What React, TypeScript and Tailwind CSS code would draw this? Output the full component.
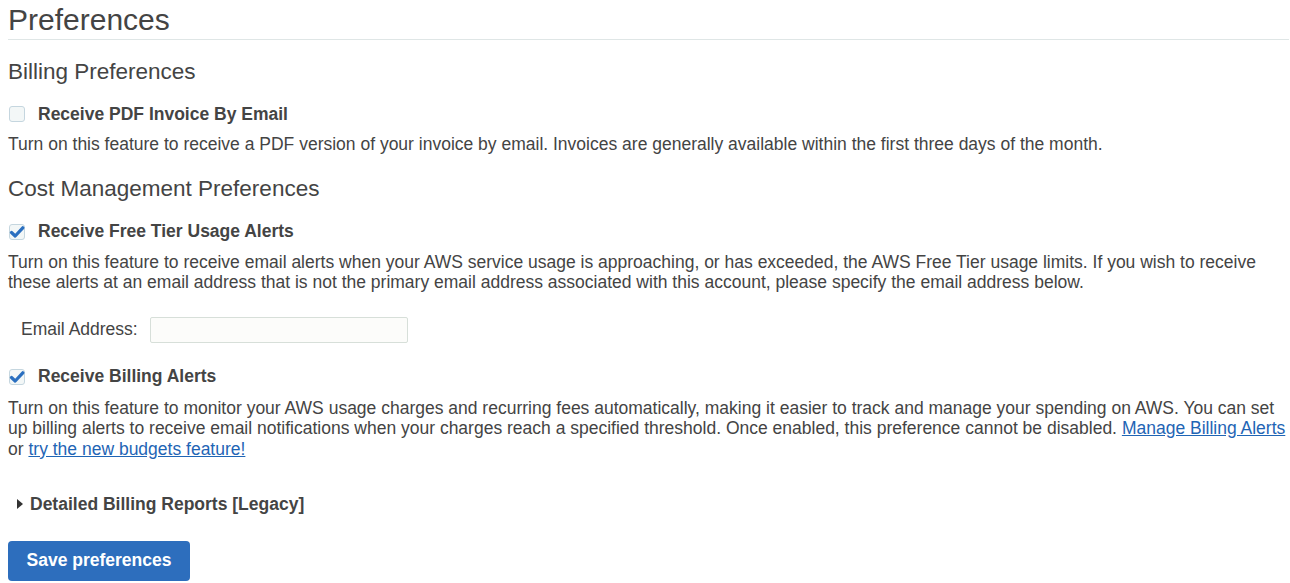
import React from "react";

function Check({ checked }: { checked?: boolean }) {
  return (
    <span className="relative inline-block w-[16px] h-[16px] rounded-[3px] border border-[#c5d6df] bg-[#f3f7f7] shrink-0">
      {checked && (
        <svg viewBox="0 0 16 16" className="absolute left-[-1px] top-[-1px] w-[16px] h-[16px]">
          <path d="M2.5 8.5 L6.2 12 L13.8 3.8" fill="none" stroke="#2a6fc0" strokeWidth="3.2" strokeLinecap="round" strokeLinejoin="round" />
        </svg>
      )}
    </span>
  );
}

function Option({ label, checked }: { label: string; checked?: boolean }) {
  return (
    <label className="flex items-center gap-[13px] pl-[1px] h-[20px] font-bold text-[17.5px] text-[#444]">
      <Check checked={checked} />
      <span>{label}</span>
    </label>
  );
}

export default function App() {
  return (
    <div className="bg-white text-[#444] text-[17.5px] leading-[20.5px] pl-2 pr-[1px] pb-1" style={{ fontFamily: '"Liberation Sans", Arial, sans-serif' }}>
      <h1 className="text-[30px] leading-[36px] pt-[2px] pb-[1px] border-b border-[#dfe6e6]">Preferences</h1>

      <h2 className="text-[22.5px] leading-[26px] mt-[19px]">Billing Preferences</h2>
      <div className="mt-[19px]">
        <Option label="Receive PDF Invoice By Email" />
      </div>
      <p className="mt-[10px]">
        Turn on this feature to receive a PDF version of your invoice by email. Invoices are generally available within the first three days of the month.
      </p>

      <h2 className="text-[22.5px] leading-[26px] mt-[21px]">Cost Management Preferences</h2>
      <div className="mt-[20px]">
        <Option label="Receive Free Tier Usage Alerts" checked />
      </div>
      <p className="mt-[10px]">
        Turn on this feature to receive email alerts when your AWS service usage is approaching, or has exceeded, the AWS Free Tier usage limits. If you wish to receive these alerts at an email address that is not the primary email address associated with this account, please specify the email address below.
      </p>
      <div className="flex items-center mt-[24px] pl-[13px] gap-[12px]">
        <span>Email Address:</span>
        <input className="w-[258px] h-[26px] border border-[#d7dfd9] rounded-[2px] bg-[#fcfcfa] outline-none" />
      </div>

      <div className="mt-[24px]">
        <Option label="Receive Billing Alerts" checked />
      </div>
      <p className="mt-[11px]">
        Turn on this feature to monitor your AWS usage charges and recurring fees automatically, making it easier to track and manage your spending on AWS. You can set up billing alerts to receive email notifications when your charges reach a specified threshold. Once enabled, this preference cannot be disabled.{" "}
        <a href="#" className="text-[#1f65b5] underline">Manage Billing Alerts</a> or{" "}
        <a href="#" className="text-[#1f65b5] underline">try the new budgets feature!</a>
      </p>

      <div className="flex items-center mt-[35px] pl-[9px] gap-[7px] font-bold text-[17.5px]">
        <svg viewBox="0 0 6 10" className="w-[6px] h-[10px]">
          <path d="M0 0 L6 5 L0 10 Z" fill="#333" />
        </svg>
        <span>Detailed Billing Reports [Legacy]</span>
      </div>

      <button className="mt-[26px] w-[182px] h-[40px] rounded-[4px] bg-[#2d6ebd] text-white font-bold text-[17.5px]">
        Save preferences
      </button>
    </div>
  );
}
